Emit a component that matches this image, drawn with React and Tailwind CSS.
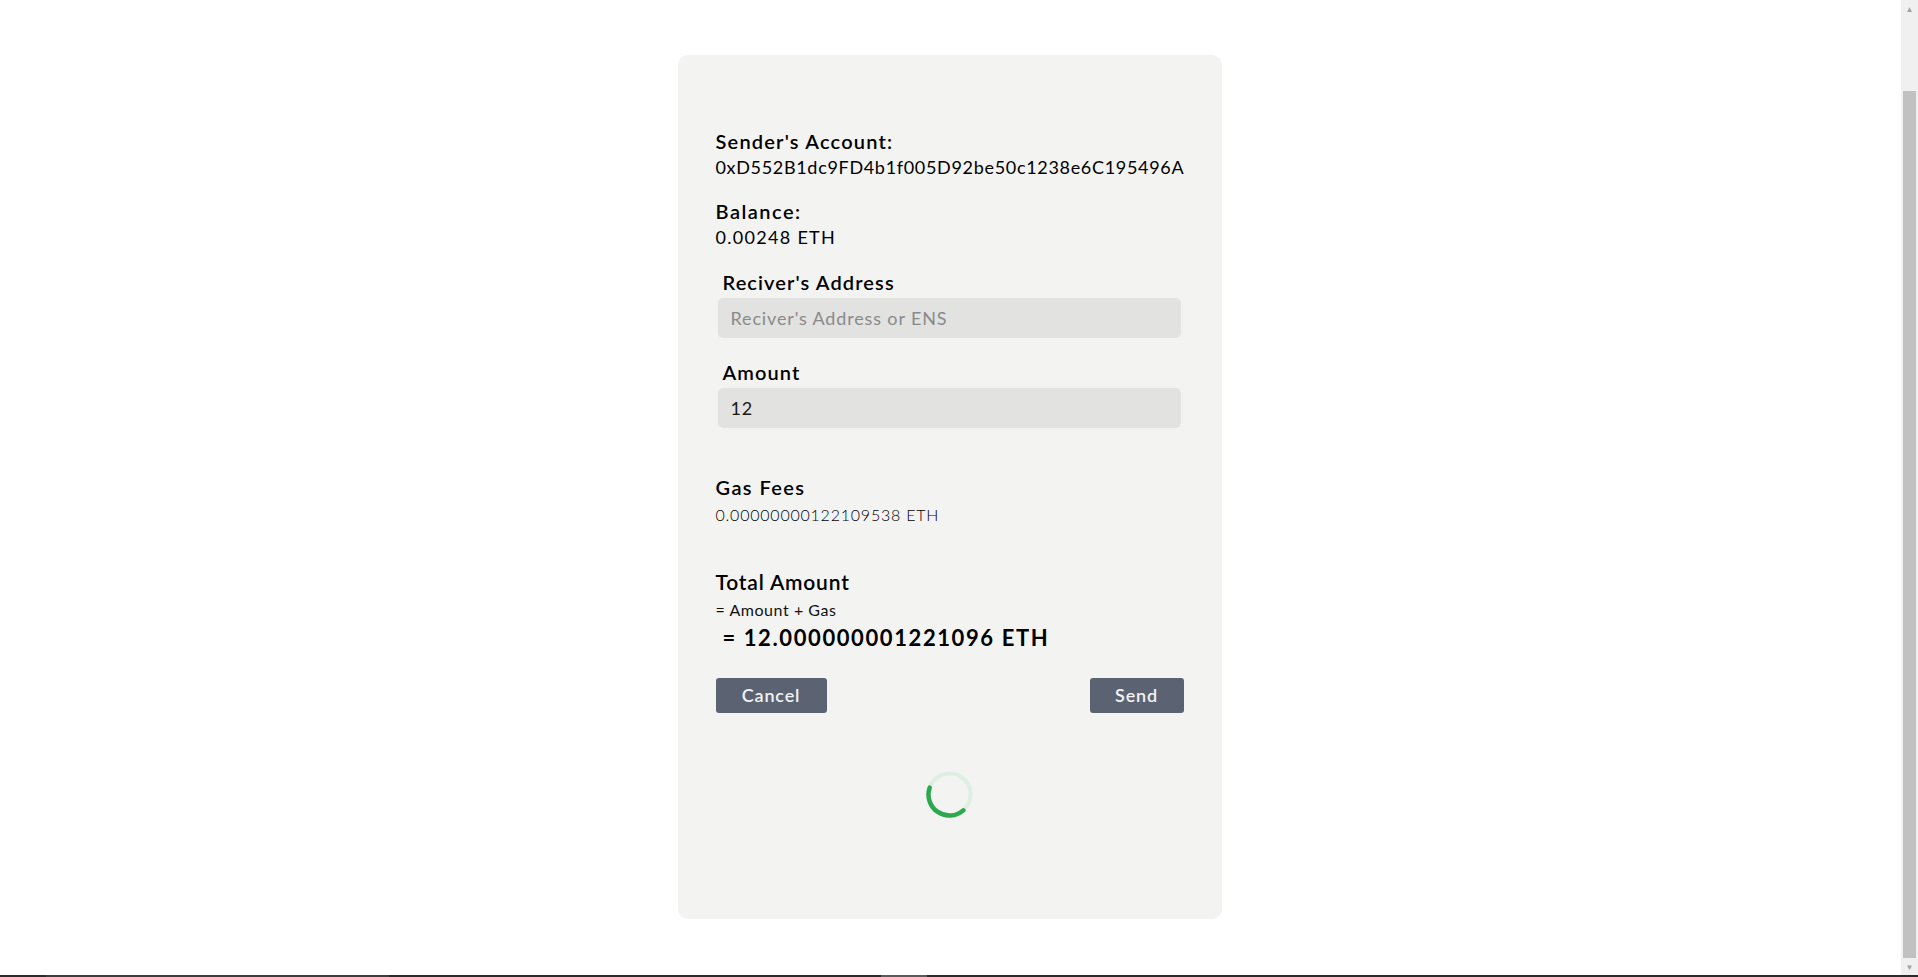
import React from 'react'

const font = { fontFamily: 'Lato, "Open Sans", sans-serif' }

function Spinner() {
  return (
    <svg width="47" height="47" viewBox="0 0 47 47">
      <circle cx="23.5" cy="23.5" r="21" fill="none" stroke="#dfeee2" strokeWidth="4" />
      <path d="M37.3 39.35 A21 21 0 0 1 3.64 16.66" fill="none" stroke="#2ea84f" strokeWidth="4.5" strokeLinecap="round" />
    </svg>
  )
}

function Campo({ label, placeholder, value }) {
  return (
    <>
      <div className="ml-[7px] text-[20px] leading-[24px] font-semibold tracking-[1.1px] text-black">{label}</div>
      <input
        readOnly
        placeholder={placeholder}
        defaultValue={value}
        className="ml-[2px] mt-[4px] block w-[463px] h-[40px] rounded-[5px] bg-[#e2e2e1] pl-[13px] text-[18px] tracking-[0.85px] text-[#1a1a1a] placeholder:text-[#8a8a8a] outline-none"
      />
    </>
  )
}

export default function App() {
  return (
    <div className="h-[977px] flex flex-col overflow-hidden bg-white" style={font}>
      <div className="flex flex-1 min-h-0">
        <main className="flex-1">
          <div className="mx-auto mt-[55px] w-[544px] h-[864px] -translate-x-[1px] rounded-[10px] bg-[#f3f3f2] px-[38px] pt-[74px]">
            <div className="text-[20px] leading-[24px] font-semibold tracking-[1.2px] text-black">Sender's Account:</div>
            <div className="mt-[2px] text-[18px] leading-[24px] tracking-[0.68px] text-black">0xD552B1dc9FD4b1f005D92be50c1238e6C195496A</div>

            <div className="mt-[20px] text-[20px] leading-[24px] font-semibold tracking-[1.5px] text-black">Balance:</div>
            <div className="mt-[2px] text-[18px] leading-[24px] tracking-[1.3px] text-black">0.00248 ETH</div>

            <div className="mt-[21px]">
              <Campo label="Reciver's Address" placeholder="Reciver's Address or ENS" />
            </div>
            <div className="mt-[22px]">
              <Campo label="Amount" value="12" />
            </div>

            <div className="mt-[47px] text-[20px] leading-[24px] font-semibold tracking-[1.4px] text-black">Gas Fees</div>
            <div className="mt-[6px] text-[16px] leading-[20px] font-light tracking-[0.78px] text-black">0.00000000122109538 ETH</div>

            <div className="mt-[45px] text-[21px] leading-[24px] font-semibold tracking-[0.8px] text-black">Total Amount</div>
            <div className="mt-[7px] text-[16px] leading-[18px] font-normal tracking-[0.55px] text-[#111]">= Amount + Gas</div>
            <div className="mt-[6px] text-[22px] leading-[26px] font-bold tracking-[1.6px] text-black whitespace-pre"> = 12.000000001221096 ETH</div>

            <div className="mt-[27px] flex justify-between">
              <button className="w-[111px] h-[35px] rounded-[3px] bg-[#5b6372] text-[18px] font-semibold tracking-[0.8px] text-[#f2f2f2]">Cancel</button>
              <button className="w-[94px] h-[35px] rounded-[3px] bg-[#5b6372] text-[18px] font-semibold tracking-[0.8px] text-[#f2f2f2]">Send</button>
            </div>

            <div className="mt-[58px] flex justify-center">
              <Spinner />
            </div>
          </div>
        </main>
        <div className="w-[17px] bg-[#f0f0f0] flex flex-col items-center">
          <div className="h-[17px] flex items-center justify-center text-[8px] leading-none text-[#a3a3a3]">▲</div>
          <div className="mt-[74px] w-[13px] flex-1 bg-[#c1c1c1]" />
          <div className="h-[17px] flex items-center justify-center text-[8px] leading-none text-[#a3a3a3]">▼</div>
        </div>
      </div>
      <div className="h-[2px] flex bg-[#2b2b2b]">
        <div className="ml-[46px] w-[343px] bg-[#3d3d3d]" />
        <div className="ml-[492px] w-[46px] bg-[#5a5a5a]" />
      </div>
    </div>
  )
}
